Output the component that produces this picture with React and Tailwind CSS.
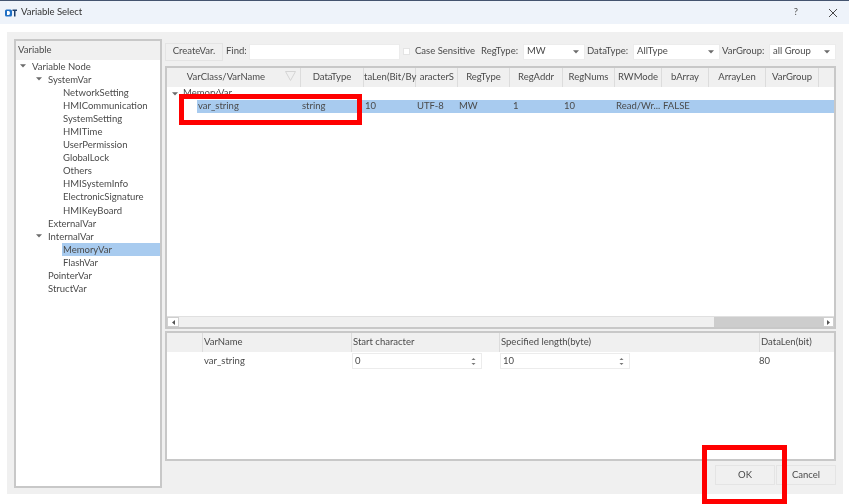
const treeRows = [
  { label: 'Variable Node', indent: 'ml-[15px]', arrow: 'left-[4px]' },
  { label: 'SystemVar', indent: 'ml-[31px]', arrow: 'left-[20px]' },
  { label: 'NetworkSetting', indent: 'ml-[46px]' },
  { label: 'HMICommunication', indent: 'ml-[46px]' },
  { label: 'SystemSetting', indent: 'ml-[46px]' },
  { label: 'HMITime', indent: 'ml-[46px]' },
  { label: 'UserPermission', indent: 'ml-[46px]' },
  { label: 'GlobalLock', indent: 'ml-[46px]' },
  { label: 'Others', indent: 'ml-[46px]' },
  { label: 'HMISystemInfo', indent: 'ml-[46px]' },
  { label: 'ElectronicSignature', indent: 'ml-[46px]' },
  { label: 'HMIKeyBoard', indent: 'ml-[46px]' },
  { label: 'ExternalVar', indent: 'ml-[31px]' },
  { label: 'InternalVar', indent: 'ml-[31px]', arrow: 'left-[20px]' },
  { label: 'MemoryVar', indent: 'ml-[46px]', selected: true },
  { label: 'FlashVar', indent: 'ml-[46px]' },
  { label: 'PointerVar', indent: 'ml-[31px]' },
  { label: 'StructVar', indent: 'ml-[31px]' },
];

const columns = [
  { label: 'VarClass/VarName', width: 'w-[134px]', align: 'justify-center pr-[15px]' },
  { label: 'DataType', width: 'w-[63px]', align: 'justify-center' },
  { label: 'taLen(Bit/By', width: 'w-[52px]', align: 'justify-start' },
  { label: 'aracterS', width: 'w-[42px]', align: 'justify-end pr-[3px]' },
  { label: 'RegType', width: 'w-[52px]', align: 'justify-center' },
  { label: 'RegAddr', width: 'w-[53px]', align: 'justify-center' },
  { label: 'RegNums', width: 'w-[52px]', align: 'justify-center' },
  { label: 'RWMode', width: 'w-[47px]', align: 'justify-center' },
  { label: 'bArray', width: 'w-[47px]', align: 'justify-center' },
  { label: 'ArrayLen', width: 'w-[57px]', align: 'justify-center' },
  { label: 'VarGroup', width: 'w-[53px]', align: 'justify-center' },
];

const rowCells = [
  { text: 'var_string', width: 'w-[104px]', pad: 'pl-[1px]' },
  { text: 'string', width: 'w-[63px]', pad: 'pl-[1px]' },
  { text: '10', width: 'w-[52px]', pad: 'pl-[1px]' },
  { text: 'UTF-8', width: 'w-[42px]', pad: 'pl-[1px]' },
  { text: 'MW', width: 'w-[52px]', pad: 'pl-[1px]' },
  { text: '1', width: 'w-[53px]', pad: 'pl-[3px]' },
  { text: '10', width: 'w-[52px]', pad: 'pl-[1px]' },
  { text: 'Read/Wr...', width: 'w-[47px]', pad: 'pl-[1px]' },
  { text: 'FALSE', width: 'w-[47px]', pad: 'pl-[1px]' },
];

function Arrow({ className }) {
  return (
    <svg width="6" height="4" viewBox="0 0 6 4" className={className}>
      <path d="M0 0.2 L6 0.2 L3 3.5 Z" fill="#6b6b6b" />
    </svg>
  );
}

function Combo({ value, width }) {
  return (
    <div className={`${width} h-[16px] bg-white border border-[#ececec] flex items-center justify-between pl-[3px] pr-[5px]`}>
      <span>{value}</span>
      <Arrow />
    </div>
  );
}

function Spin({ value, width }) {
  return (
    <div className={`${width} h-[16px] bg-white border border-[#ececec] flex items-center justify-between pl-[2px] pr-[5px]`}>
      <span>{value}</span>
      <svg width="5" height="9" viewBox="0 0 5 9">
        <path d="M0.5 3 L2.5 1 L4.5 3 Z M0.5 6 L2.5 8 L4.5 6 Z" fill="#777" />
      </svg>
    </div>
  );
}

export default function App() {
  return (
    <div className="relative w-[849px] h-[504px] overflow-hidden bg-white text-[#4a4a4a] text-[9.5px] font-['Lato','Open_Sans',sans-serif] blur-[0.4px]">
      <div className="h-[24px] bg-[#eef3fa] border-t border-[#44546f] flex items-center pl-[5px]">
        <svg width="12" height="8" viewBox="0 0 12 8">
          <rect x="0" y="0.5" width="7" height="7" rx="1.5" fill="#1f6fc4" />
          <path d="M2 2 H3.5 Q5 2 5 4 Q5 6 3.5 6 H2 Z" fill="#fff" />
          <path d="M7.5 0.5 H12 V2 H10.5 V7.5 H9 V2 H7.5 Z" fill="#1d3f6b" />
        </svg>
        <span className="ml-[4px] text-[#333]">Variable Select</span>
        <span className="ml-auto mr-[30px] text-[#555]">?</span>
        <svg width="10" height="10" viewBox="0 0 10 10" className="mr-[11px]">
          <path d="M1 1 L9 9 M9 1 L1 9" stroke="#333" strokeWidth="0.9" />
        </svg>
      </div>

      <div className="mt-[8px] mx-[7px] w-[836px] h-[462px] bg-[#f0f0f0] pt-[7px] pl-[7px] flex gap-[3px]">
        <div className="w-[148px] h-[449px] bg-white border-2 border-[#c8c8c8] shrink-0">
          <div className="h-[19px] bg-[#f0f0f0] flex items-center pl-[2px]">Variable</div>
          <div className="flex flex-col">
            {treeRows.map((row) => (
              <div key={row.label} className="relative h-[13.05px] flex">
                {row.arrow && <Arrow className={`absolute top-[4px] ${row.arrow}`} />}
                <span
                  className={`${row.indent} pl-[1px] flex-1 leading-[13px] whitespace-nowrap ${
                    row.selected ? 'bg-[#a8cbef]' : ''
                  }`}
                >
                  {row.label}
                </span>
              </div>
            ))}
          </div>
        </div>

        <div className="w-[671px] flex flex-col">
          <div className="h-[17px] mt-[4px] flex items-center">
            <div className="w-[58px] h-[18px] bg-[#f0f0f0] border border-[#e4e4e4] flex items-center justify-center">CreateVar.</div>
            <span className="ml-[3px] w-[23px]">Find:</span>
            <div className="w-[151px] h-[16px] bg-white border border-[#ececec]" />
            <div className="ml-[3px] w-[7px] h-[7px] bg-white border border-[#e4e4e4]" />
            <span className="ml-[5px] w-[66px] whitespace-nowrap">Case Sensitive</span>
            <span className="w-[42px] whitespace-nowrap">RegType:</span>
            <Combo value="MW" width="w-[62px]" />
            <span className="ml-[2px] w-[46px] whitespace-nowrap">DataType:</span>
            <Combo value="AllType" width="w-[87px]" />
            <span className="ml-[2px] w-[47px] whitespace-nowrap">VarGroup:</span>
            <Combo value="all Group" width="w-[67px]" />
          </div>

          <div className="mt-[6px] h-[263px] w-[671px] bg-white border-2 border-[#c8c8c8] flex flex-col">
            <div className="h-[19px] bg-[#f0f0f0] flex shrink-0">
              {columns.map((col) => (
                <div
                  key={col.label}
                  className={`${col.width} ${col.align} shrink-0 whitespace-nowrap flex items-center border-r border-[#dcdcdc] relative`}
                >
                  {col.label}
                  {col.label === 'VarClass/VarName' && (
                    <svg width="11" height="10" viewBox="0 0 11 10" className="absolute right-[4px] top-[3px]">
                      <path d="M0.5 0.5 H10.5 L5.5 9.5 Z" fill="none" stroke="#d4d4d4" />
                    </svg>
                  )}
                </div>
              ))}
            </div>
            <div className="h-[13px] flex items-center pl-[5px]">
              <Arrow />
              <span className="ml-[5px]">MemoryVar</span>
            </div>
            <div className="h-[13px] bg-[#a8cbef] flex items-center ml-[30px]">
              {rowCells.map((cell) => (
                <div key={cell.text} className={`${cell.width} ${cell.pad} shrink-0 whitespace-nowrap`}>
                  {cell.text}
                </div>
              ))}
            </div>
            <div className="flex-1" />
            <div className="h-[11px] bg-[#f0f0f0] flex items-center border-t border-[#e0e0e0]">
              <div className="w-[12px] h-[10px] bg-white border border-[#cfcfcf] flex items-center justify-center">
                <svg width="3" height="5" viewBox="0 0 3 5"><path d="M3 0 V5 L0 2.5 Z" fill="#555" /></svg>
              </div>
              <div className="w-[535px] h-[10px] bg-[#f0f0f0]" />
              <div className="flex-1 h-[10px] bg-[#cdcdcd]" />
              <div className="w-[11px] h-[10px] bg-white border border-[#cfcfcf] flex items-center justify-center">
                <svg width="3" height="5" viewBox="0 0 3 5"><path d="M0 0 V5 L3 2.5 Z" fill="#555" /></svg>
              </div>
            </div>
          </div>

          <div className="mt-[2px] h-[130px] w-[671px] bg-white border-2 border-[#c8c8c8]">
            <div className="h-[19px] bg-[#f0f0f0] flex">
              <div className="w-[36px] border-r border-[#dcdcdc]" />
              <div className="w-[149px] pl-[1px] flex items-center border-r border-[#dcdcdc]">VarName</div>
              <div className="w-[148px] pl-[1px] flex items-center border-r border-[#dcdcdc]">Start character</div>
              <div className="w-[260px] pl-[1px] flex items-center border-r border-[#dcdcdc]">Specified length(byte)</div>
              <div className="flex-1 pl-[1px] flex items-center">DataLen(bit)</div>
            </div>
            <div className="h-[18px] flex items-center">
              <div className="w-[36px]" />
              <div className="w-[149px] pl-[1px]">var_string</div>
              <div className="w-[148px]"><Spin value="0" width="w-[130px]" /></div>
              <div className="w-[260px]"><Spin value="10" width="w-[130px]" /></div>
              <div className="flex-1 -ml-[1px]">80</div>
            </div>
          </div>

          <div className="mt-[4px] flex justify-end gap-[1px]">
            <div className="w-[60px] h-[20px] bg-[#f0f0f0] border border-[#e4e4e4] flex items-center justify-center">OK</div>
            <div className="w-[60px] h-[20px] bg-[#f0f0f0] border border-[#e4e4e4] flex items-center justify-center">Cancel</div>
          </div>
        </div>
      </div>

      {/* red annotation boxes drawn over the dialog */}
      <div className="absolute left-[179px] top-[94px] w-[183px] h-[31px] border-[5px] border-[#ff0000]" />
      <div className="absolute left-[702px] top-[445px] w-[85px] h-[59px] border-[5px] border-[#ff0000]" />
    </div>
  );
}
